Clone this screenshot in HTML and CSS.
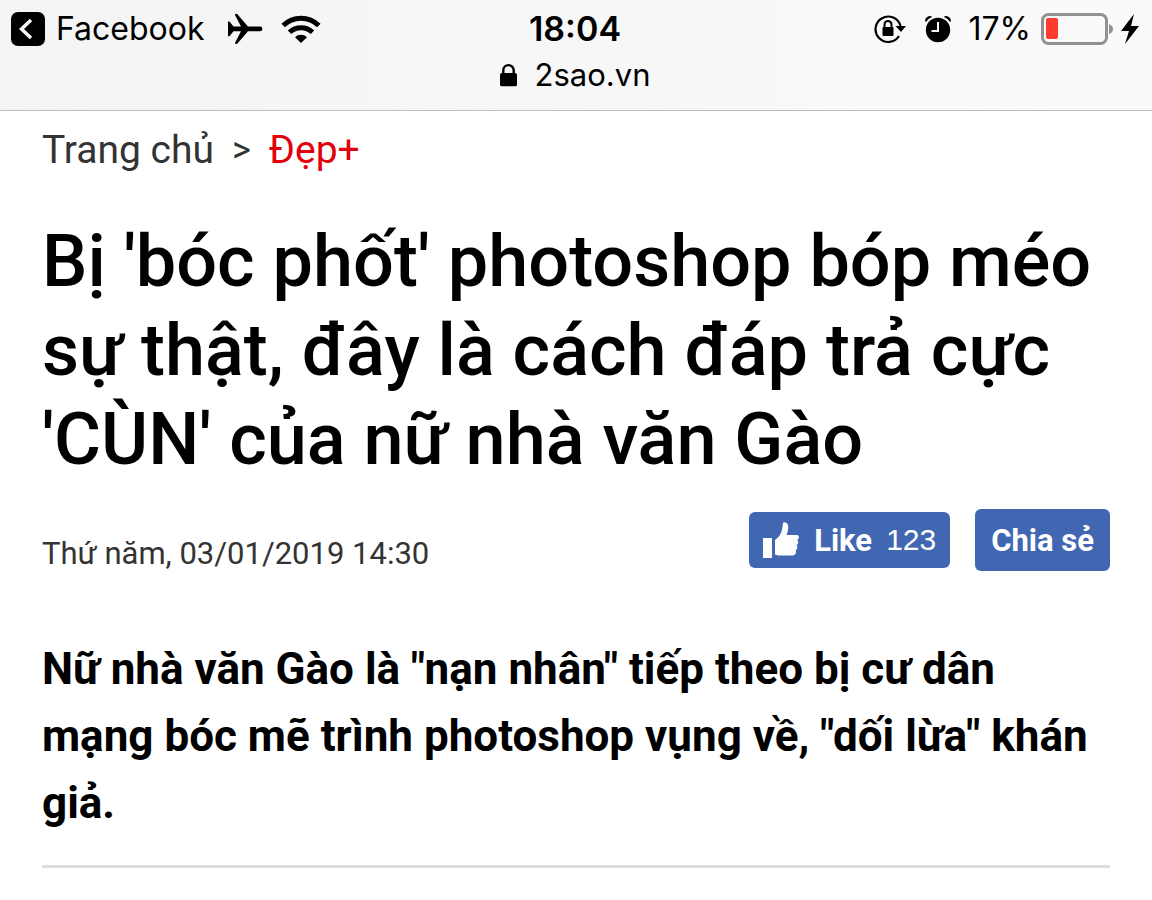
FILE: index.html
```html
<!DOCTYPE html>
<html lang="vi">
<head>
<meta charset="utf-8">
<meta name="viewport" content="width=device-width, initial-scale=1">
<title>2sao.vn</title>
<link rel="stylesheet" href="styles.css">
</head>
<body>
<header class="browser-bar">
  <div class="status">
    <div class="status-left">
      <a class="back" href="#">
        <svg class="back-icon" viewBox="0 0 34 34" aria-hidden="true"><rect width="34" height="34" rx="7"/><path d="M20 8 10.500 17 20 26" fill="none" stroke="#f7f6f7" stroke-width="3.500"/></svg>
        <span>Facebook</span>
      </a>
      <svg class="plane" viewBox="0 0 36 32" aria-hidden="true"><path d="M1 8.500h1.500l4 5H14L8 2q0-1.500 2-1.200L21 13.500h12a2.400 2.400 0 0 1 0 4.800H21L10 31q-2 .3-2-1.200l6-11.500H6.500l-4 5H1z"/></svg>
      <svg class="wifi" viewBox="0 0 40 28" aria-hidden="true"><g fill="none" stroke="#000" stroke-width="5"><path d="M2.200 10.500a25.500 25.500 0 0 1 35.600 0"/><path d="M8.500 17.300a16.500 16.500 0 0 1 23 0"/></g><path d="M14 22.200a8.500 8.500 0 0 1 12 0L20 28z"/></svg>
    </div>
    <time class="clock">18:04</time>
    <div class="status-right">
      <svg class="rotation" viewBox="0 0 32 30" aria-hidden="true"><path d="M26.500 12A12.700 12.700 0 1 0 25 22" fill="none" stroke="#000" stroke-width="2.200"/><path d="M21.500 12H32l-5 6z"/><rect x="8.500" y="13" width="11" height="9" rx="1"/><path d="M10.500 14v-3.500a3.500 3.500 0 0 1 7 0V14" fill="none" stroke="#000" stroke-width="2"/></svg>
      <svg class="alarm" viewBox="0 0 28 28" aria-hidden="true"><circle cx="14" cy="15" r="12.200"/><path d="M14 7v9H7.500" fill="none" stroke="#faf9fa" stroke-width="2"/><path d="M1 6Q1.500 1 7 1l1 1Q4 3.500 2 7zM27 6Q26.500 1 21 1l-1 1q4 1.500 6 5z"/></svg>
      <span class="percent">17%</span>
      <svg class="battery" viewBox="0 0 72 32" aria-hidden="true"><rect x="1.500" y="1.500" width="64" height="29" rx="6" fill="none" stroke="#929292" stroke-width="3"/><rect x="5" y="5" width="12" height="21" rx="2" fill="#ff3b30"/><path d="M68 11q4 1.500 4 5t-4 5z" fill="#929292"/></svg>
      <svg class="bolt" viewBox="0 0 18 30" aria-hidden="true"><path d="M13 0 0 17h8L4 30 18 12h-8z"/></svg>
    </div>
  </div>
  <div class="address">
    <svg class="lock" viewBox="0 0 18 24" aria-hidden="true"><rect y="10" width="18" height="14" rx="2"/><path d="M3.500 12V7a5.500 5.500 0 0 1 11 0v5" fill="none" stroke="#000" stroke-width="2.500"/></svg>
    <span>2sao.vn</span>
  </div>
</header>
<main class="article">
  <nav class="breadcrumb"><a href="#">Trang chủ</a><span class="separator">&gt;</span><a class="current" href="#">Đẹp+</a></nav>
  <h1 class="title">Bị 'bóc phốt' photoshop bóp méo sự thật, đây là cách đáp trả cực 'CÙN' của nữ nhà văn Gào</h1>
  <div class="meta">
    <time class="date">Thứ năm, 03/01/2019 14:30</time>
    <div class="social">
      <button class="like" type="button">
        <svg class="thumb" viewBox="0 0 36 36" aria-hidden="true"><path d="M0 16h9v20H0zM12 18c4-3 6-6 7-10l1-7c.3-1.300 4-1 5 2 .7 3-.2 7-1.500 10H34c2.500 0 2.500 4 0 5 2 1.500 1.500 4-.5 5 1.500 1.500 1 4-.8 5 1 2 .2 5-2.700 5.500H15l-3-1z"/></svg>
        <span class="like-label">Like</span><span class="like-count">123</span>
      </button>
      <button class="share" type="button">Chia sẻ</button>
    </div>
  </div>
  <p class="summary">Nữ nhà văn Gào là "nạn nhân" tiếp theo bị cư dân mạng bóc mẽ trình photoshop vụng về, "dối lừa" khán giả.</p>
</main>
</body>
</html>
```
FILE: styles.css
```css
* { box-sizing: border-box; }
body { margin: 0; background: #fff; color: #000; font-family: Roboto, sans-serif; }
a { color: inherit; text-decoration: none; }
svg { display: block; flex: none; }

.browser-bar {
  padding: 6px 13px 12px 11px;
  background: linear-gradient(90deg, #f5f4f5, #fafafa);
  border-bottom: 1px solid #bdbdbd;
  font-family: Inter, sans-serif;
  font-size: 32px;
  line-height: 46px;
}
.status { display: grid; grid-template-columns: 1fr auto 1fr; align-items: center; }
.status-left, .status-right, .back { display: flex; align-items: center; }
.status-right { justify-content: flex-end; }
.back { gap: 11px; }
.back-icon { width: 34px; height: 34px; }
.plane { width: 36px; height: 32px; margin-left: 22px; }
.wifi { width: 40px; height: 28px; margin-left: 18px; }
.clock { font-size: 34px; font-weight: 600; }
.rotation { width: 32px; height: 30px; }
.alarm { width: 28px; height: 28px; margin-left: 18px; }
.percent { margin-left: 16px; }
.battery { width: 72px; height: 32px; margin-left: 10px; }
.bolt { width: 18px; height: 30px; margin-left: 8px; }
.address { display: flex; align-items: center; justify-content: center; gap: 18px; font-size: 31px; }
.lock { width: 17px; height: 24px; }

.article { padding: 15px 42px 32px; }
.breadcrumb { display: flex; gap: 18px; color: #333; font-size: 39px; line-height: 48px; }
.separator { font-size: 36px; }
.current { color: #e3000b; }
.title { margin: 43px 0 0; font-size: 72px; font-weight: 500; line-height: 89px; }
.meta { display: flex; justify-content: space-between; align-items: center; margin-top: 24px; }
.date { padding-top: 28px; color: #333; font-size: 31px; line-height: 36px; }
.social { display: flex; align-items: center; gap: 25px; }
.like, .share {
  border: 0;
  border-radius: 6px;
  background: #4267b2;
  color: #fff;
  font-family: Roboto, sans-serif;
  font-size: 31px;
  font-weight: 700;
}
.like { display: flex; align-items: center; height: 56px; padding: 0 14px; }
.share { height: 62px; padding: 0 16px; }
.thumb { width: 36px; height: 36px; fill: #fff; }
.like-label { margin-left: 15px; }
.like-count { margin-left: 14px; font-family: "Liberation Sans", sans-serif; font-size: 30px; font-weight: 400; }
.summary {
  margin: 64px 0 0;
  padding-bottom: 28px;
  border-bottom: 3px solid #ddd;
  font-size: 44px;
  font-weight: 700;
  line-height: 67px;
}
```
